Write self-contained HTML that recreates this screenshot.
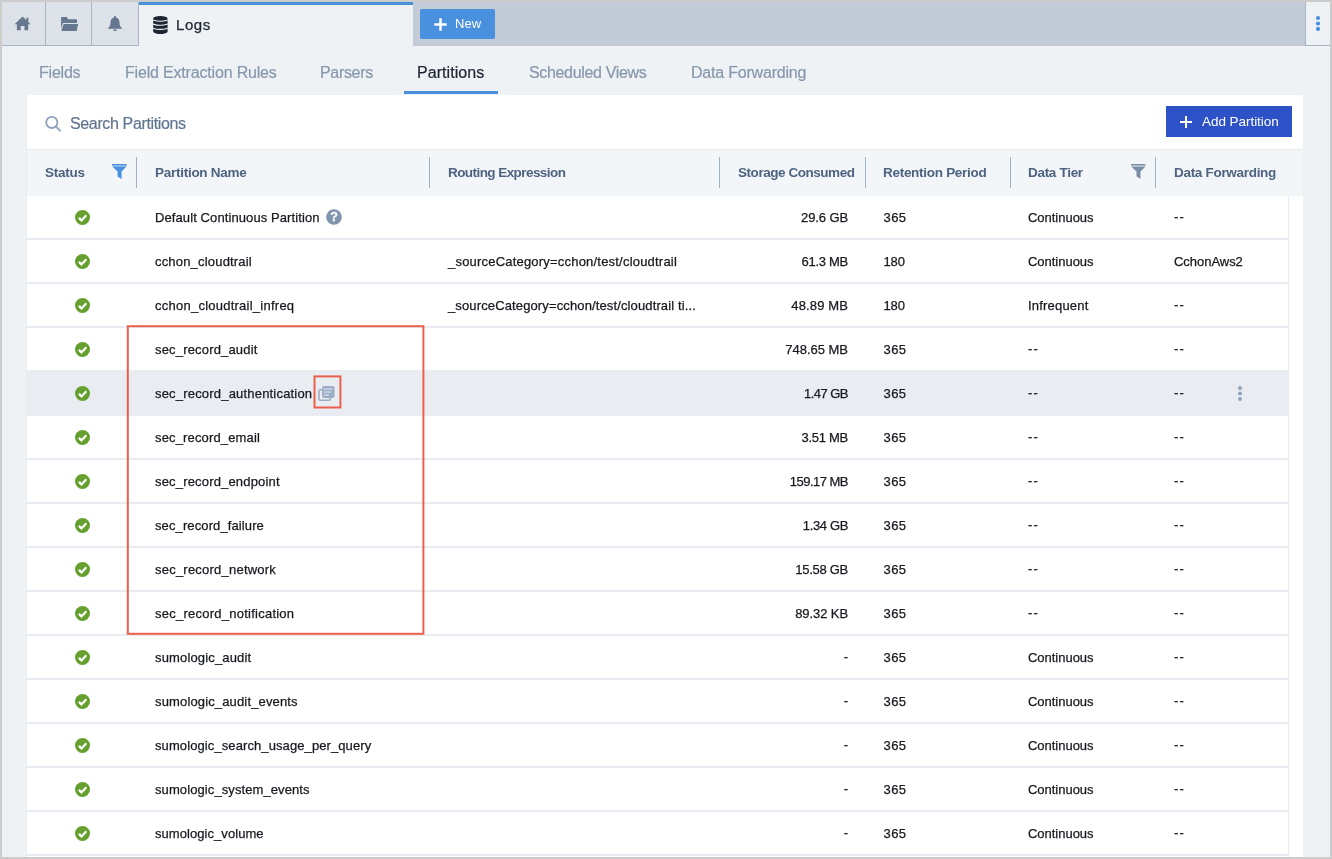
<!DOCTYPE html>
<html><head><meta charset="utf-8">
<style>
*{box-sizing:border-box;margin:0;padding:0}
html,body{width:1332px;height:859px;overflow:hidden;background:#ccc;font-family:"Liberation Sans",sans-serif}
#app{will-change:transform;position:absolute;left:2px;top:2px;width:1328px;height:855px;background:#eef2f4;overflow:hidden}
#topbar{position:absolute;left:0;top:0;width:1328px;height:44px;background:#c3ccd6}
.itab{position:absolute;top:0;height:44px;background:#dde1e8;border-right:1px solid #a9b6c6;border-bottom:1px solid #a9b6c6}
.itab svg{position:absolute}
#logstab{position:absolute;left:137px;top:0;width:274px;height:44px;background:#eef2f4;border-top:3px solid #4a90d9}
#logstab span{position:absolute;left:37px;top:11px;font-size:15px;color:#1d2432;-webkit-text-stroke:0.25px #1d2432}
#newbtn{position:absolute;left:418px;top:7px;width:75px;height:30px;background:#4990df;border-radius:2px;color:#fff;font-size:13px}
#newbtn span{position:absolute;left:35px;top:7px}
#more{position:absolute;left:1303px;top:0;width:25px;height:44px;background:#eef2f4;border-left:1px solid #a9b6c6;border-bottom:1px solid #a9b6c6}
.nav{position:absolute;top:62px;font-size:16px;color:#8797ad;white-space:nowrap;-webkit-text-stroke:0.2px #8797ad}
.nav.act{color:#1d2432;-webkit-text-stroke-color:#1d2432}
#underline{position:absolute;left:402px;top:89px;width:94px;height:3px;background:#4a90d9}
#panel{position:absolute;left:25px;top:93px;width:1276px;height:770px;background:#fff;box-shadow:-1px 0 0 #e8ecef}
#search{position:absolute;left:43px;top:20px;font-size:16px;color:#5f7590;-webkit-text-stroke:0.2px #5f7590}
#addbtn{position:absolute;left:1139px;top:11px;width:126px;height:31px;background:#2d52c8;color:#fff;font-size:13.5px}
#addbtn span{position:absolute;left:36px;top:8px;white-space:nowrap}
#thead{position:absolute;left:0;top:54px;width:1276px;height:47px;background:#f3f6f9;border-top:1px solid #e6ebf0}
.th{position:absolute;top:15px;font-size:13.5px;font-weight:bold;color:#4d6380;white-space:nowrap}
.sep{position:absolute;top:7px;width:1px;height:31px;background:#9fb0c3}
.row{position:absolute;left:0;width:1261px;height:44px;border-bottom:2px solid #e8ecf2;font-size:13px;color:#16191f;-webkit-text-stroke:0.25px #16191f}
.row.hl{background:#e9ecf1;border-bottom-color:#e9ecf1;box-shadow:0 -2px 0 #e9ecf1}
.row span{position:absolute;top:14px;white-space:nowrap}
.row span.d{top:13px}
.row .c1{left:128px}.row .c2{left:421px}.row .c3{right:440px}.row .c4{left:856.5px}.row .c5{left:1001px}.row .c6{left:1147px}
.chk{position:absolute;left:48px;top:14px;width:15px;height:15px}
#rowsright{position:absolute;left:1261px;top:101px;width:1px;height:700px;background:#e9edf3}
#n1{left:37px}#n2{left:123px}#n3{left:318px}#n4{left:415px}#n5{left:527px}#n6{left:689px}
#h1{left:18px}#h2{left:128px}#h3{left:421px}#h4{left:711px}#h5{left:856px}#h6{left:1001px}#h7{left:1147px}
.help{position:absolute;left:299.1px;top:13.4px}.copy{position:absolute;left:291px;top:14px}
.kebab{position:absolute;left:1210px;top:13px}
</style></head><body>
<div id="app">
 <div id="topbar">
  <div class="itab" style="left:0;width:44px"></div>
  <div class="itab" style="left:44px;width:46px"></div>
  <div class="itab" style="left:90px;width:47px"></div>
  <svg style="position:absolute;left:0;top:0" width="137" height="44" viewBox="2 2 137 44"><g fill="#66788f"><path d="M22.6 16.4 L30.5 24.2 H28.2 V30.2 H24.5 V26 H20.7 V30.2 H16.9 V24.2 H14.6 Z M26.3 17.8 H28.4 V22.6 L26.3 20.5 Z"/><path d="M61.1 17.6 Q61.1 17 61.7 17 H66.9 L68.1 19.2 H76.4 Q77 19.2 77 19.8 V23 H63 L61.1 28.6 Z M63.7 24.1 H78.1 L76.7 30.9 H61.2 Z"/><path d="M115 15.9 c0.6 0 1 0.4 1 1 v0.5 c2.3 0.6 3.5 2.6 3.5 5.2 c0 2.6 0.5 4 2.6 5.6 v0.5 h-14.2 v-0.5 c2.1 -1.6 2.6 -3 2.6 -5.6 c0 -2.6 1.2 -4.6 3.5 -5.2 v-0.5 c0 -0.6 0.4 -1 1 -1 z M112.9 29.4 h4.2 a2.1 1.7 0 0 1 -4.2 0 z"/></g></svg>
  <div id="logstab"><svg style="position:absolute;left:14px;top:10.7px" width="14.8" height="18.2" viewBox="0 0 14.8 18.2"><path fill="#1d2432" d="M0.2 2.6 A7.2 2.6 0 0 1 14.6 2.6 V15.4 A7.2 2.8 0 0 1 0.2 15.4 Z"/><path d="M0 4.0 Q7.4 6.4 14.8 4.0 M0 8.1 Q7.4 10.5 14.8 8.1 M0 12.2 Q7.4 14.6 14.8 12.2" fill="none" stroke="#eef2f4" stroke-width="1.1"/></svg><span style="letter-spacing:0.567px">Logs</span></div>
  <div id="newbtn"><svg style="position:absolute;left:13.6px;top:8.7px" width="13" height="13" viewBox="0 0 13 13"><path d="M6.5 0.3V12.7M0.3 6.5H12.7" stroke="#fff" stroke-width="2.5"/></svg><span style="letter-spacing:0.1px">New</span></div>
  <div id="more"><svg style="position:absolute;left:7.9px;top:12px" width="8" height="18" viewBox="0 0 8 18"><g fill="#4a90e2"><circle cx="4" cy="4" r="2.1"/><circle cx="4" cy="9.6" r="2.1"/><circle cx="4" cy="14.9" r="2.1"/></g></svg></div>
 </div>
 <div class="nav" id="n1" style="letter-spacing:-0.22px">Fields</div>
 <div class="nav" id="n2" style="letter-spacing:-0.181px">Field Extraction Rules</div>
 <div class="nav" id="n3" style="letter-spacing:-0.333px">Parsers</div>
 <div class="nav act" id="n4" style="letter-spacing:0.056px">Partitions</div>
 <div class="nav" id="n5" style="letter-spacing:-0.336px">Scheduled Views</div>
 <div class="nav" id="n6" style="letter-spacing:-0.207px">Data Forwarding</div>
 <div id="underline"></div>
 <div id="panel">
  <svg style="position:absolute;left:17px;top:20px" width="18" height="18" viewBox="0 0 18 18"><circle cx="7.8" cy="7.4" r="5.6" fill="none" stroke="#8ca1ba" stroke-width="1.8"/><path d="M12 11.6 L16 15.6" stroke="#8ca1ba" stroke-width="2" stroke-linecap="round"/></svg>
  <div id="search" style="letter-spacing:-0.362px">Search Partitions</div>
  <div id="addbtn"><svg style="position:absolute;left:14px;top:9.6px" width="12" height="12" viewBox="0 0 12 12"><path d="M6 0V12M0 6H12" stroke="#fff" stroke-width="2"/></svg><span style="letter-spacing:-0.05px">Add Partition</span></div>
  <div id="thead">
   <div class="th" id="h1" style="letter-spacing:-0.24px">Status</div>
   <svg style="position:absolute;left:85.1px;top:13.9px" width="14.8" height="15.1" viewBox="0 0 14.8 15.1"><path fill="#4a90e2" d="M0.4 0 H14.4 Q14.8 0 14.8 0.5 V1.5 H0 V0.5 Q0 0 0.4 0 Z M0.3 2.6 H14.5 L9.6 7.4 V15.1 L5.6 12.4 V7.4 Z"/><rect x="0.1" y="1.5" width="14.6" height="1.1" fill="#4a90e2" fill-opacity="0.45"/></svg>
   <div class="sep" style="left:109px"></div>
   <div class="th" id="h2" style="letter-spacing:-0.269px">Partition Name</div>
   <div class="sep" style="left:402px"></div>
   <div class="th" id="h3" style="letter-spacing:-0.565px">Routing Expression</div>
   <div class="sep" style="left:692px"></div>
   <div class="th" id="h4" style="letter-spacing:-0.453px">Storage Consumed</div>
   <div class="sep" style="left:838px"></div>
   <div class="th" id="h5" style="letter-spacing:-0.287px">Retention Period</div>
   <div class="sep" style="left:983px"></div>
   <div class="th" id="h6" style="letter-spacing:-0.3px">Data Tier</div>
   <svg style="position:absolute;left:1104px;top:13.6px" width="14.6" height="15.1" viewBox="0 0 14.8 15.1"><path fill="#7b8da5" d="M0.4 0 H14.4 Q14.8 0 14.8 0.5 V1.5 H0 V0.5 Q0 0 0.4 0 Z M0.3 2.6 H14.5 L9.6 7.4 V15.1 L5.6 12.4 V7.4 Z"/><rect x="0.1" y="1.5" width="14.6" height="1.1" fill="#7b8da5" fill-opacity="0.45"/></svg>
   <div class="sep" style="left:1128px"></div>
   <div class="th" id="h7" style="letter-spacing:-0.3px">Data Forwarding</div>
  </div>
  <div id="rows">
   <div class="row" style="top:101px"><svg class="chk" viewBox="0 0 15 15"><circle cx="7.5" cy="7.5" r="7.5" fill="#65a02f"/><path d="M3.9 7.9 L6.5 10.4 L11.3 5.3" fill="none" stroke="#fff" stroke-width="2.2"/></svg><span class="c1" style="letter-spacing:0.096px">Default Continuous Partition</span><span class="c3" style="letter-spacing:-0.117px">29.6 GB</span><span class="c4" style="letter-spacing:0.4px">365</span><span class="c5" style="letter-spacing:-0.022px">Continuous</span><span class="c6 d" style="letter-spacing:1.1px">--</span><svg class="help" width="16" height="16" viewBox="0 0 16 16"><circle cx="8" cy="8" r="7.8" fill="#8094ae"/><text x="8" y="12.4" text-anchor="middle" font-family="Liberation Sans,sans-serif" font-weight="bold" font-size="12.5" fill="#fff" stroke="#fff" stroke-width="0.3">?</text></svg></div>
   <div class="row" style="top:145px"><svg class="chk" viewBox="0 0 15 15"><circle cx="7.5" cy="7.5" r="7.5" fill="#65a02f"/><path d="M3.9 7.9 L6.5 10.4 L11.3 5.3" fill="none" stroke="#fff" stroke-width="2.2"/></svg><span class="c1" style="letter-spacing:0.187px">cchon_cloudtrail</span><span class="c2" style="letter-spacing:0.203px">_sourceCategory=cchon/test/cloudtrail</span><span class="c3" style="letter-spacing:-0.267px">61.3 MB</span><span class="c4" style="letter-spacing:-0.15px">180</span><span class="c5" style="letter-spacing:-0.022px">Continuous</span><span class="c6" style="letter-spacing:-0.037px">CchonAws2</span></div>
   <div class="row" style="top:189px"><svg class="chk" viewBox="0 0 15 15"><circle cx="7.5" cy="7.5" r="7.5" fill="#65a02f"/><path d="M3.9 7.9 L6.5 10.4 L11.3 5.3" fill="none" stroke="#fff" stroke-width="2.2"/></svg><span class="c1" style="letter-spacing:0.245px">cchon_cloudtrail_infreq</span><span class="c2" style="letter-spacing:0.129px">_sourceCategory=cchon/test/cloudtrail ti...</span><span class="c3" style="letter-spacing:0.129px">48.89 MB</span><span class="c4" style="letter-spacing:-0.15px">180</span><span class="c5" style="letter-spacing:0.189px">Infrequent</span><span class="c6 d" style="letter-spacing:1.1px">--</span></div>
   <div class="row" style="top:233px"><svg class="chk" viewBox="0 0 15 15"><circle cx="7.5" cy="7.5" r="7.5" fill="#65a02f"/><path d="M3.9 7.9 L6.5 10.4 L11.3 5.3" fill="none" stroke="#fff" stroke-width="2.2"/></svg><span class="c1" style="letter-spacing:0.173px">sec_record_audit</span><span class="c3" style="letter-spacing:-0.025px">748.65 MB</span><span class="c4" style="letter-spacing:0.4px">365</span><span class="c5 d" style="letter-spacing:1.1px">--</span><span class="c6 d" style="letter-spacing:1.1px">--</span></div>
   <div class="row hl" style="top:277px"><svg class="chk" viewBox="0 0 15 15"><circle cx="7.5" cy="7.5" r="7.5" fill="#65a02f"/><path d="M3.9 7.9 L6.5 10.4 L11.3 5.3" fill="none" stroke="#fff" stroke-width="2.2"/></svg><span class="c1" style="letter-spacing:0.192px">sec_record_authentication</span><span class="c3" style="letter-spacing:-0.533px">1.47 GB</span><span class="c4" style="letter-spacing:0.4px">365</span><span class="c5 d" style="letter-spacing:1.1px">--</span><span class="c6 d" style="letter-spacing:1.1px">--</span><svg class="copy" width="17" height="16" viewBox="0 0 17 16"><rect x="0.95" y="3.75" width="11.4" height="10.5" rx="1.6" fill="none" stroke="#9aacc4" stroke-width="1.5"/><rect x="4" y="0" width="12.5" height="11.9" rx="1.8" fill="#9aacc4"/><path d="M5.6 3H14.7M5.6 6H13.3M5.6 9H11.2" stroke="#e9ecf1" stroke-width="1"/></svg><svg class="kebab" width="6" height="18" viewBox="0 0 6 18"><g fill="#93a5be"><circle cx="3" cy="3" r="2.1"/><circle cx="3" cy="8.5" r="2.1"/><circle cx="3" cy="14" r="2.1"/></g></svg></div>
   <div class="row" style="top:321px"><svg class="chk" viewBox="0 0 15 15"><circle cx="7.5" cy="7.5" r="7.5" fill="#65a02f"/><path d="M3.9 7.9 L6.5 10.4 L11.3 5.3" fill="none" stroke="#fff" stroke-width="2.2"/></svg><span class="c1" style="letter-spacing:0.147px">sec_record_email</span><span class="c3" style="letter-spacing:-0.267px">3.51 MB</span><span class="c4" style="letter-spacing:0.4px">365</span><span class="c5 d" style="letter-spacing:1.1px">--</span><span class="c6 d" style="letter-spacing:1.1px">--</span></div>
   <div class="row" style="top:365px"><svg class="chk" viewBox="0 0 15 15"><circle cx="7.5" cy="7.5" r="7.5" fill="#65a02f"/><path d="M3.9 7.9 L6.5 10.4 L11.3 5.3" fill="none" stroke="#fff" stroke-width="2.2"/></svg><span class="c1" style="letter-spacing:0.172px">sec_record_endpoint</span><span class="c3" style="letter-spacing:-0.525px">159.17 MB</span><span class="c4" style="letter-spacing:0.4px">365</span><span class="c5 d" style="letter-spacing:1.1px">--</span><span class="c6 d" style="letter-spacing:1.1px">--</span></div>
   <div class="row" style="top:409px"><svg class="chk" viewBox="0 0 15 15"><circle cx="7.5" cy="7.5" r="7.5" fill="#65a02f"/><path d="M3.9 7.9 L6.5 10.4 L11.3 5.3" fill="none" stroke="#fff" stroke-width="2.2"/></svg><span class="c1" style="letter-spacing:0.112px">sec_record_failure</span><span class="c3" style="letter-spacing:-0.367px">1.34 GB</span><span class="c4" style="letter-spacing:0.4px">365</span><span class="c5 d" style="letter-spacing:1.1px">--</span><span class="c6 d" style="letter-spacing:1.1px">--</span></div>
   <div class="row" style="top:453px"><svg class="chk" viewBox="0 0 15 15"><circle cx="7.5" cy="7.5" r="7.5" fill="#65a02f"/><path d="M3.9 7.9 L6.5 10.4 L11.3 5.3" fill="none" stroke="#fff" stroke-width="2.2"/></svg><span class="c1" style="letter-spacing:0.224px">sec_record_network</span><span class="c3" style="letter-spacing:-0.286px">15.58 GB</span><span class="c4" style="letter-spacing:0.4px">365</span><span class="c5 d" style="letter-spacing:1.1px">--</span><span class="c6 d" style="letter-spacing:1.1px">--</span></div>
   <div class="row" style="top:497px"><svg class="chk" viewBox="0 0 15 15"><circle cx="7.5" cy="7.5" r="7.5" fill="#65a02f"/><path d="M3.9 7.9 L6.5 10.4 L11.3 5.3" fill="none" stroke="#fff" stroke-width="2.2"/></svg><span class="c1" style="letter-spacing:0.245px">sec_record_notification</span><span class="c3" style="letter-spacing:-0.086px">89.32 KB</span><span class="c4" style="letter-spacing:0.4px">365</span><span class="c5 d" style="letter-spacing:1.1px">--</span><span class="c6 d" style="letter-spacing:1.1px">--</span></div>
   <div class="row" style="top:541px"><svg class="chk" viewBox="0 0 15 15"><circle cx="7.5" cy="7.5" r="7.5" fill="#65a02f"/><path d="M3.9 7.9 L6.5 10.4 L11.3 5.3" fill="none" stroke="#fff" stroke-width="2.2"/></svg><span class="c1" style="letter-spacing:0.157px">sumologic_audit</span><span class="c3 d">-</span><span class="c4" style="letter-spacing:0.4px">365</span><span class="c5" style="letter-spacing:-0.022px">Continuous</span><span class="c6 d" style="letter-spacing:1.1px">--</span></div>
   <div class="row" style="top:585px"><svg class="chk" viewBox="0 0 15 15"><circle cx="7.5" cy="7.5" r="7.5" fill="#65a02f"/><path d="M3.9 7.9 L6.5 10.4 L11.3 5.3" fill="none" stroke="#fff" stroke-width="2.2"/></svg><span class="c1" style="letter-spacing:0.148px">sumologic_audit_events</span><span class="c3 d">-</span><span class="c4" style="letter-spacing:0.4px">365</span><span class="c5" style="letter-spacing:-0.022px">Continuous</span><span class="c6 d" style="letter-spacing:1.1px">--</span></div>
   <div class="row" style="top:629px"><svg class="chk" viewBox="0 0 15 15"><circle cx="7.5" cy="7.5" r="7.5" fill="#65a02f"/><path d="M3.9 7.9 L6.5 10.4 L11.3 5.3" fill="none" stroke="#fff" stroke-width="2.2"/></svg><span class="c1" style="letter-spacing:0.097px">sumologic_search_usage_per_query</span><span class="c3 d">-</span><span class="c4" style="letter-spacing:0.4px">365</span><span class="c5" style="letter-spacing:-0.022px">Continuous</span><span class="c6 d" style="letter-spacing:1.1px">--</span></div>
   <div class="row" style="top:673px"><svg class="chk" viewBox="0 0 15 15"><circle cx="7.5" cy="7.5" r="7.5" fill="#65a02f"/><path d="M3.9 7.9 L6.5 10.4 L11.3 5.3" fill="none" stroke="#fff" stroke-width="2.2"/></svg><span class="c1" style="letter-spacing:0.095px">sumologic_system_events</span><span class="c3 d">-</span><span class="c4" style="letter-spacing:0.4px">365</span><span class="c5" style="letter-spacing:-0.022px">Continuous</span><span class="c6 d" style="letter-spacing:1.1px">--</span></div>
   <div class="row" style="top:717px"><svg class="chk" viewBox="0 0 15 15"><circle cx="7.5" cy="7.5" r="7.5" fill="#65a02f"/><path d="M3.9 7.9 L6.5 10.4 L11.3 5.3" fill="none" stroke="#fff" stroke-width="2.2"/></svg><span class="c1" style="letter-spacing:0.06px">sumologic_volume</span><span class="c3 d">-</span><span class="c4" style="letter-spacing:0.4px">365</span><span class="c5" style="letter-spacing:-0.022px">Continuous</span><span class="c6 d" style="letter-spacing:1.1px">--</span></div>
  </div>
  <div id="rowsright"></div>
  <svg style="position:absolute;left:0;top:0" width="1276" height="764"><g fill="none" stroke="#e9614d" stroke-width="2"><rect x="100.8" y="231.2" width="295.6" height="307.6"/><rect x="287.5" y="281.4" width="25.9" height="31.1"/></g></svg>
 </div>
</div>
</body></html>
